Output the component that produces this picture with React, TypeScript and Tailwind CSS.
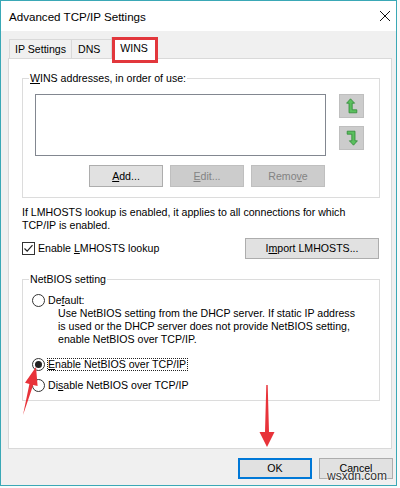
import React from "react";

const Key = ({ children }: { children: React.ReactNode }) => <span className="underline underline-offset-[1px]">{children}</span>;

const Radio = ({ checked = false }: { checked?: boolean }) => (
  <span className="flex items-center justify-center w-[13px] h-[13px] shrink-0 rounded-full border border-[#333333] bg-white">
    {checked && <span className="w-[7px] h-[7px] rounded-full bg-[#222222]" />}
  </span>
);

const Checkbox = () => (
  <span className="flex items-center justify-center w-[13px] h-[13px] shrink-0 border border-[#333333] bg-white">
    <svg width="11" height="11" viewBox="0 0 11 11">
      <path d="M1.5 5.5 L4.2 8.2 L9.5 2.2" fill="none" stroke="#222" strokeWidth="1.2" />
    </svg>
  </span>
);

const MoveIcon = ({ down = false }: { down?: boolean }) => (
  <svg width="12" height="16" viewBox="0 0 12 16" className={down ? "rotate-180" : ""}>
    <path
      d="M4.5 0.8 L8.6 5.2 L6.2 5.2 L6.2 11.8 L10.8 11.8 L10.8 14.8 L3 14.8 L3 5.2 L0.6 5.2 Z"
      fill="#5bbf5e"
      stroke="#2f8a36"
      strokeWidth="0.8"
      strokeLinejoin="round"
    />
  </svg>
);

const Button = ({
  children,
  disabled = false,
  primary = false,
  className = "",
}: {
  children: React.ReactNode;
  disabled?: boolean;
  primary?: boolean;
  className?: string;
}) => (
  <div
    className={
      "flex items-center justify-center " +
      (disabled
        ? "bg-[#cccccc] border border-[#bfbfbf] text-[#838383] "
        : primary
        ? "bg-[#e1e1e1] border-2 border-[#0078d7] "
        : "bg-[#e1e1e1] border border-[#adadad] ") +
      className
    }
  >
    {children}
  </div>
);

export default function App() {
  return (
    <div className="relative w-[400px] h-[488px] bg-[#fafafa] overflow-hidden font-['Liberation_Sans',Arial,sans-serif] text-[10.6px] leading-[13px] text-black">
      <div className="flex flex-col w-[397px] h-[486px] border border-[#3aa8b6] bg-[#f0f0f0]">
        {/* title bar */}
        <div className="flex items-center justify-between h-[30px] bg-white pl-[8px] pr-[5px] text-[11.6px]">
          <span>Advanced TCP/IP Settings</span>
          <svg width="12" height="12" viewBox="0 0 12 12">
            <path d="M1 1 L11 11 M11 1 L1 11" stroke="#111" strokeWidth="1" />
          </svg>
        </div>

        <div className="flex-1 flex flex-col pl-[7px] pr-[4px] pt-[6px]">
          {/* tabs */}
          <div className="flex items-end h-[21px] pl-[1px]">
            <div className="flex items-center h-[19px] px-[5px] border-l border-t border-r border-[#d9d9d9]">IP Settings</div>
            <div className="flex items-center h-[19px] w-[39px] pl-[6px] border-t border-[#d9d9d9]">DNS</div>
            <div className="relative z-10 flex items-center justify-center h-[22px] w-[46px] -mb-px bg-white border-l border-t border-r border-[#d9d9d9]">
              WINS
            </div>
          </div>

          {/* tab page */}
          <div className="flex flex-col h-[391px] w-[384px] bg-white border border-[#d9d9d9]">
            <fieldset className="ml-[13px] mt-[13px] w-[358px] border border-[#dcdcdc]">
              <legend className="ml-[6px] px-[1px]">
                <Key>W</Key>INS addresses, in order of use:
              </legend>
              <div className="pl-[12px] pt-[9px] pb-[10px]">
                <div className="flex">
                  <div className="w-[291px] h-[62px] bg-white border border-[#828790]" />
                  <div className="flex flex-col gap-[8px] ml-[13px]">
                    <div className="flex items-center justify-center w-[25px] h-[24px] bg-[#cccccc] border border-[#bfbfbf]">
                      <MoveIcon />
                    </div>
                    <div className="flex items-center justify-center w-[25px] h-[24px] bg-[#cccccc] border border-[#bfbfbf]">
                      <MoveIcon down />
                    </div>
                  </div>
                </div>
                <div className="flex gap-[7px] mt-[9px] ml-[54px]">
                  <Button className="w-[74px] h-[22px]">
                    <Key>A</Key>dd...
                  </Button>
                  <Button disabled className="w-[74px] h-[22px]">
                    <Key>E</Key>dit...
                  </Button>
                  <Button disabled className="w-[74px] h-[22px]">
                    Remo<Key>v</Key>e
                  </Button>
                </div>
              </div>
            </fieldset>

            <p className="ml-[13px] mt-[8px]">
              If LMHOSTS lookup is enabled, it applies to all connections for which
              <br />
              TCP/IP is enabled.
            </p>

            <div className="flex items-center justify-between h-[21px] mt-[6px] ml-[13px] mr-[12px]">
              <label className="flex items-center gap-[3px]">
                <Checkbox />
                <span>
                  Enable <Key>L</Key>MHOSTS lookup
                </span>
              </label>
              <Button className="w-[134px] h-[21px]">
                <span>
                  I<Key>m</Key>port LMHOSTS...
                </span>
              </Button>
            </div>

            <fieldset className="ml-[13px] mt-[14px] w-[358px] border border-[#dcdcdc]">
              <legend className="ml-[6px] px-[1px]">NetBIOS setting</legend>
              <div className="pl-[9px] pt-[8px] pb-[8px]">
                <div className="flex items-center h-[13px] gap-[3px]">
                  <Radio />
                  <span>
                    De<Key>f</Key>ault:
                  </span>
                </div>
                <div className="pl-[26px]">
                  <div>Use NetBIOS setting from the DHCP server. If static IP address</div>
                  <div>is used or the DHCP server does not provide NetBIOS setting,</div>
                  <div>enable NetBIOS over TCP/IP.</div>
                </div>
                <div className="flex items-center h-[13px] gap-[2px] mt-[12px]">
                  <Radio checked />
                  <span className="border border-dotted border-[#222222] leading-[11px] pr-[1px]">
                    <Key>E</Key>nable NetBIOS over TCP/IP
                  </span>
                </div>
                <div className="flex items-center h-[13px] gap-[3px] mt-[8px]">
                  <Radio />
                  <span>
                    Di<Key>s</Key>able NetBIOS over TCP/IP
                  </span>
                </div>
              </div>
            </fieldset>
          </div>

          {/* dialog buttons */}
          <div className="flex justify-end gap-[7px] mt-[9px] -mr-px">
            <Button primary className="w-[74px] h-[21px]">
              OK
            </Button>
            <Button className="w-[74px] h-[21px]">Cancel</Button>
          </div>
        </div>
      </div>

      {/* callout over the WINS tab */}
      <div className="absolute left-[112px] top-[37px] w-[46px] h-[26px] border-[3px] border-[#e2373c] z-20" />

      {/* pointer arrows */}
      <svg className="absolute left-0 top-0 z-20 pointer-events-none" width="400" height="488" viewBox="0 0 400 488">
        <polygon points="23,415 33.2,384.9 37.6,386.1 36,367 25,382.7 29.4,383.9" fill="#e8333a" />
        <polygon points="266.3,385 267.7,385 269,432 274.5,432 267,447 259.5,432 265,432" fill="#e8333a" />
      </svg>

      <span className="absolute left-[327px] top-[469px] z-20 text-[12px] leading-[15px] text-[#333333] [text-shadow:0_0_2px_#fff,0_0_2px_#fff]">
        wsxdn.com
      </span>
    </div>
  );
}
